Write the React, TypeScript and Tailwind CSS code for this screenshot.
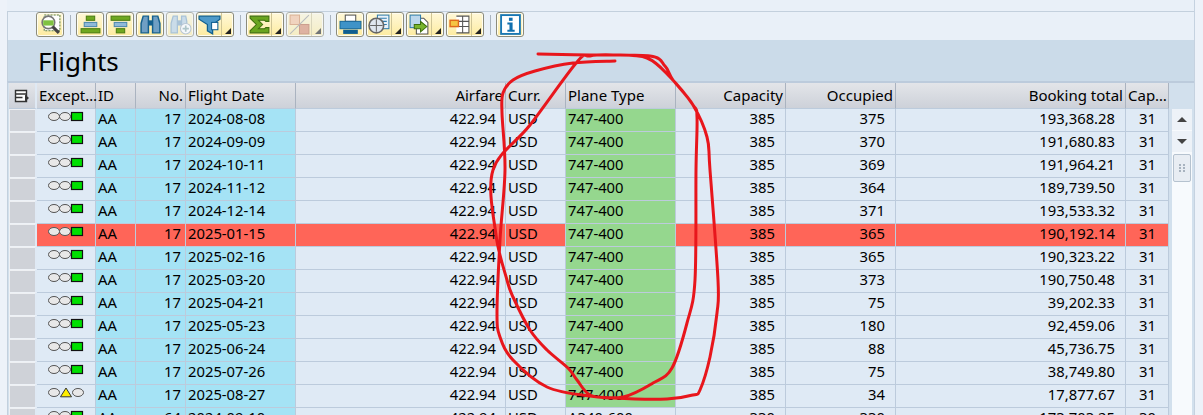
import type { ReactNode } from "react";

type Row = { no: number; date: string; plane?: string; cap?: number; occ: number; total: string; c2?: number; light?: "green" | "yellow"; hot?: boolean };

const rows: Row[] = [
  { no: 17, date: "2024-08-08", occ: 375, total: "193,368.28" },
  { no: 17, date: "2024-09-09", occ: 370, total: "191,680.83" },
  { no: 17, date: "2024-10-11", occ: 369, total: "191,964.21" },
  { no: 17, date: "2024-11-12", occ: 364, total: "189,739.50" },
  { no: 17, date: "2024-12-14", occ: 371, total: "193,533.32" },
  { no: 17, date: "2025-01-15", occ: 365, total: "190,192.14", hot: true },
  { no: 17, date: "2025-02-16", occ: 365, total: "190,323.22" },
  { no: 17, date: "2025-03-20", occ: 373, total: "190,750.48" },
  { no: 17, date: "2025-04-21", occ: 75, total: "39,202.33" },
  { no: 17, date: "2025-05-23", occ: 180, total: "92,459.06" },
  { no: 17, date: "2025-06-24", occ: 88, total: "45,736.75" },
  { no: 17, date: "2025-07-26", occ: 75, total: "38,749.80" },
  { no: 17, date: "2025-08-27", occ: 34, total: "17,877.67", light: "yellow" },
  { no: 64, date: "2024-09-10", plane: "A340-600", cap: 330, occ: 330, total: "173,703.25", c2: 30 },
];

// red marker scribble, traced off the screenshot
const scribble: [number, number][] = [
  [615, 61], [573, 63], [535, 71], [513, 80], [503, 93], [502, 113], [505, 170], [500, 240], [497, 313], [500, 337],
  [513, 360], [547, 387], [590, 396], [623, 397], [653, 383], [672, 368], [687, 323], [695, 280], [696, 170], [697, 117],
  [693, 105], [670, 77], [647, 58], [613, 55], [590, 56], [577, 62], [530, 125], [493, 170], [496, 235], [507, 280],
  [513, 297], [530, 330], [547, 350], [568, 368], [577, 380], [590, 395], [613, 398], [667, 399], [693, 395], [700, 390],
  [710, 357], [717, 313], [718, 280], [710, 170], [707, 137], [693, 105], [673, 80], [665, 66], [650, 56], [590, 55], [538, 54],
];

function smooth(p: [number, number][]) {
  let d = `M${p[0][0]} ${p[0][1]}`;
  for (let i = 0; i < p.length - 1; i++) {
    const a = p[Math.max(i - 1, 0)];
    const b = p[i];
    const c = p[i + 1];
    const e = p[Math.min(i + 2, p.length - 1)];
    d += ` C${b[0] + (c[0] - a[0]) / 6} ${b[1] + (c[1] - a[1]) / 6} ${c[0] - (e[0] - b[0]) / 6} ${c[1] - (e[1] - b[1]) / 6} ${c[0]} ${c[1]}`;
  }
  return d;
}

function Btn({ children, menu, off }: { children: ReactNode; menu?: boolean; off?: boolean }) {
  return (
    <div className={`flex h-[25px] rounded-[3px] border border-[#8c8c7c] bg-gradient-to-b from-[#fff8d8] to-[#fdeb9f] shadow-[inset_0_0_0_1px_#fffdf0] ${off ? "opacity-60" : ""}`}>
      <div className={`flex items-center justify-center ${menu ? "w-[24px]" : "w-[26px]"}`}>
        <svg width="23" height="23" viewBox="0 0 22 22">{children}</svg>
      </div>
      {menu && (
        <div className="flex w-[12px] items-end justify-end border-l border-[#cfc596] p-[2px]">
          <div className="h-0 w-0 border-b-[6px] border-l-[6px] border-b-[#222] border-l-transparent" />
        </div>
      )}
    </div>
  );
}

const Sep = () => <div className="mx-[3.500px] h-[20px] w-[1px] bg-[#a9b4bf]" />;

function Light({ kind }: { kind: "green" | "yellow" }) {
  return (
    <svg width="36" height="11" viewBox="0 0 36 11" className="mx-auto mb-[4px] block">
      <g fill="#e8e8e8" stroke="#555" strokeWidth="1">
        <ellipse cx="6" cy="5.500" rx="5.500" ry="4" />
        {kind === "green" ? (
          <ellipse cx="17" cy="5.500" rx="5.500" ry="4" />
        ) : (
          <ellipse cx="30" cy="5.500" rx="5.500" ry="4" />
        )}
      </g>
      {kind === "green" ? (
        <rect x="23.500" y="1.500" width="11" height="8" fill="#00e000" stroke="#111" strokeWidth="1.200" />
      ) : (
        <path d="M12.500 9.800 L18 1 L23.500 9.800 Z" fill="#ffee00" stroke="#333" strokeWidth="1" />
      )}
    </svg>
  );
}

const hd = "h-[26px] border-r border-b border-r-[#aab3c0] border-b-[#bccbdc] bg-gradient-to-b from-[#e3e5e9] to-[#cdd1d9] px-[2px] text-[15px] font-normal";

export default function App() {
  return (
    <div className="relative h-[415px] w-[1203px] overflow-hidden bg-[#edf2f9] font-['Noto_Sans',sans-serif] text-[14.8px] leading-none text-black">
      <div className="ml-[7px] h-full w-[1188px] border-r border-[#c5d2e0] bg-[#dfe9f4]">
        <div className="h-[11px] bg-[#e9f0f8]" />
        {/* toolbar */}
        <div className="flex h-[29px] items-start border-t border-l border-[#c3d0dd] bg-[#e9f0f8] pl-[28px]">
          <div className="flex items-center gap-[2px]">
            <Btn>
              <rect x="5" y="2" width="15" height="15" fill="#fff" stroke="#5d7f44" strokeDasharray="2 1" />
              <circle cx="9" cy="9" r="6" fill="#fff" stroke="#777" strokeWidth="1.600" />
              <rect x="4" y="7" width="10" height="5" fill="#7fc241" />
              <path d="M13 13 L19 19" stroke="#444" strokeWidth="3" />
            </Btn>
            <Sep />
            <Btn>
              <rect x="7" y="3" width="8" height="4" fill="#6fa820" stroke="#4b7d12" />
              <rect x="5" y="9" width="12" height="4" fill="#8fb9d8" stroke="#4c88b0" />
              <rect x="2" y="15" width="18" height="4" fill="#6fa820" stroke="#4b7d12" />
            </Btn>
            <Btn>
              <rect x="2" y="3" width="18" height="4" fill="#6fa820" stroke="#4b7d12" />
              <rect x="5" y="9" width="12" height="4" fill="#8fb9d8" stroke="#4c88b0" />
              <rect x="7" y="15" width="8" height="4" fill="#6fa820" stroke="#4b7d12" />
            </Btn>
            <Btn>
              <path d="M4 3h5v16H2V10zM13 3h5l2 7v9h-7z" fill="#6f9fc4" stroke="#15608f" strokeWidth="1.400" />
              <rect x="9" y="7" width="4" height="5" fill="#15608f" />
            </Btn>
            <Btn off>
              <path d="M4 3h4v16H2V10zM12 3h4l1 5v4h-5z" fill="#b7cfe0" stroke="#7ea5c2" strokeWidth="1.200" />
              <rect x="8" y="7" width="4" height="5" fill="#7ea5c2" />
              <circle cx="16" cy="15" r="5" fill="#fff" stroke="#9ab" />
              <path d="M13 15h6M16 12v6" stroke="#8aa" strokeWidth="1.600" />
            </Btn>
            <Btn menu>
              <path d="M1 3h20v3l-7 5v9l-5-3v-6L1 6z" fill="#4e9ac9" stroke="#0f5f90" strokeWidth="1.200" />
              <rect x="13" y="9" width="6" height="7" fill="#fff" stroke="#0f5f90" />
            </Btn>
            <Sep />
            <Btn menu>
              <path d="M2 3h18v5h-3l-1-1H10l4 4-4 4h6l1-1h3v5H2v-2l6-6-6-6z" fill="#6aa51f" stroke="#3e6f0c" />
            </Btn>
            <Btn menu off>
              <rect x="2" y="2" width="9" height="9" fill="#f6c19a" stroke="#d28a5a" />
              <rect x="11" y="11" width="9" height="9" fill="#d88a6a" stroke="#b96a4a" />
              <path d="M2 20 L20 2" stroke="#999" />
            </Btn>
            <Sep />
            <Btn>
              <rect x="6" y="2" width="10" height="6" fill="#fff" stroke="#555" />
              <rect x="1" y="8" width="20" height="7" fill="#3f93c8" stroke="#1a6a9c" />
              <rect x="4" y="16" width="14" height="4" fill="#0f5f90" />
            </Btn>
            <Btn menu>
              <rect x="9" y="2" width="11" height="13" fill="#e8f2fa" stroke="#2f7cad" />
              <path d="M11 5h7M11 8h7M11 11h7" stroke="#2f7cad" />
              <circle cx="8" cy="12" r="7" fill="#dfe6ee" stroke="#666" strokeWidth="1.500" />
              <path d="M8 6v12M2 12h12" stroke="#666" />
            </Btn>
            <Btn menu>
              <path d="M8 5h7l4 4v11H8z" fill="#fff" stroke="#555" />
              <rect x="2" y="2" width="10" height="12" fill="#bcd7ec" stroke="#2f7cad" />
              <path d="M6 11h6V8l6 5-6 5v-3H6z" fill="#79b52c" stroke="#3e6f0c" />
            </Btn>
            <Btn menu>
              <path d="M8 3h12v16H8M14 3v16M8 8h12M8 13h12" fill="#fff" stroke="#555" />
              <rect x="2" y="7" width="8" height="6" fill="#f5c542" stroke="#e06a1a" strokeWidth="1.400" />
            </Btn>
            <Sep />
            <Btn>
              <rect x="2" y="2" width="18" height="18" fill="#fff" stroke="#1877b5" strokeWidth="1.800" />
              <rect x="9.500" y="4.500" width="3.500" height="3" fill="#0f6fae" />
              <path d="M8 9h5v7h2v2H8v-2h2v-5H8z" fill="#0f6fae" />
            </Btn>
          </div>
        </div>
        {/* title */}
        <div className="flex h-[41px] items-center border-l border-[#c3d0dd] bg-[#cbdbe9] pl-[30px] text-[26px]">Flights</div>
        <div className="flex items-start border-t-2 border-l border-t-[#bccbdc] border-l-[#c3d0dd] bg-[#d2e0ed] pl-[1px]">
          <table className="w-[1160px] table-fixed border-separate border-spacing-0">
            <colgroup>
              <col className="w-[28px]" /><col className="w-[59px]" /><col className="w-[40px]" /><col className="w-[50px]" /><col className="w-[110px]" />
              <col className="w-[210px]" /><col className="w-[60px]" /><col className="w-[110px]" /><col className="w-[110px]" /><col className="w-[110px]" />
              <col className="w-[230px]" /><col className="w-[43px]" />
            </colgroup>
            <thead>
              <tr>
                <th className="h-[26px] border-r-2 border-b border-r-[#dfe9f4] border-b-[#bccbdc] bg-gradient-to-b from-[#e3e5e9] to-[#cdd1d9] p-0">
                  <svg width="16" height="14" viewBox="0 0 16 14" className="mx-auto block">
                    <path d="M1.500 1.500h11v11h-11zM1.500 5h11M1.500 8.500h7" fill="#fff" stroke="#333" strokeWidth="1.400" />
                    <path d="M11 5.500l4 3.500-4 3.500z" fill="#333" />
                  </svg>
                </th>
                <th className={`${hd} text-left`}>Except…</th>
                <th className={`${hd} text-left`}>ID</th>
                <th className={`${hd} text-right`}>No.</th>
                <th className={`${hd} text-left`}>Flight Date</th>
                <th className={`${hd} text-right`}>Airfare</th>
                <th className={`${hd} text-left`}>Curr.</th>
                <th className={`${hd} text-left`}>Plane Type</th>
                <th className={`${hd} text-right`}>Capacity</th>
                <th className={`${hd} text-right`}>Occupied</th>
                <th className={`${hd} text-right`}>Booking total</th>
                <th className={`${hd} text-left`}>Cap…</th>
              </tr>
            </thead>
            <tbody>
              {rows.map((r) => {
                const base = `h-[23px] border-r border-b border-[#bccbdc] px-[2px] pt-0 pb-[3px] ${r.hot ? "bg-[#ff6558]" : "bg-[#dfeaf5]"}`;
                const key = `h-[23px] border-r border-b border-[#bccbdc] px-[2px] pt-0 pb-[3px] ${r.hot ? "bg-[#ff6558]" : "bg-[#a5e3f5]"}`;
                return (
                  <tr key={r.date}>
                    <td className="h-[23px] border-r-2 border-b border-r-[#dfe9f4] border-b-[#eef2f7] bg-[#cfd2d8] p-0 shadow-[inset_1px_1px_0_#eef0f3]" />
                    <td className={`${base} pb-0`}>
                      <Light kind={r.light ?? "green"} />
                    </td>
                    <td className={key}>AA</td>
                    <td className={`${key} pr-[4px] text-right`}>{r.no}</td>
                    <td className={key}>{r.date}</td>
                    <td className={`${base} pr-[9px] text-right`}>422.94</td>
                    <td className={base}>USD</td>
                    <td className={`h-[23px] border-r border-b border-[#bccbdc] px-[2px] pt-0 pb-[3px] ${r.plane ? "bg-[#dfeaf5]" : "bg-[#95d78e]"}`}>{r.plane ?? "747-400"}</td>
                    <td className={`${base} pr-[10px] text-right`}>{r.cap ?? 385}</td>
                    <td className={`${base} pr-[10px] text-right`}>{r.occ}</td>
                    <td className={`${base} pr-[10px] text-right`}>{r.total}</td>
                    <td className={`${base} pr-[12px] text-right`}>{r.c2 ?? 31}</td>
                  </tr>
                );
              })}
            </tbody>
          </table>
          {/* scrollbar */}
          <div className="ml-[3px] mt-[26px] flex h-[306px] w-[20px] flex-col items-center gap-[1px] bg-[#f7fafd]">
            <div className="flex h-[21px] w-full items-center justify-center bg-[#edf2f8]">
              <div className="h-0 w-0 border-x-[5px] border-b-[5px] border-x-transparent border-b-[#444]" />
            </div>
            <div className="flex h-[21px] w-full items-center justify-center bg-[#edf2f8]">
              <div className="h-0 w-0 border-x-[5px] border-t-[5px] border-x-transparent border-t-[#444]" />
            </div>
            <div className="mt-[1px] flex h-[28px] w-[18px] items-center justify-center rounded-[2px] border border-[#b5c2cf] bg-[#e8edf3]">
              <svg width="6" height="8" viewBox="0 0 6 8" fill="#a8b3bf">
                <rect x="0" y="0" width="2" height="2" /><rect x="4" y="0" width="2" height="2" />
                <rect x="0" y="3" width="2" height="2" /><rect x="4" y="3" width="2" height="2" />
                <rect x="0" y="6" width="2" height="2" /><rect x="4" y="6" width="2" height="2" />
              </svg>
            </div>
          </div>
        </div>
      </div>
      <svg className="pointer-events-none absolute inset-0" width="1203" height="415" viewBox="0 0 1203 415">
        <path d={smooth(scribble)} fill="none" stroke="#e8161c" strokeWidth="3" strokeLinecap="round" strokeLinejoin="round" />
      </svg>
    </div>
  );
}
